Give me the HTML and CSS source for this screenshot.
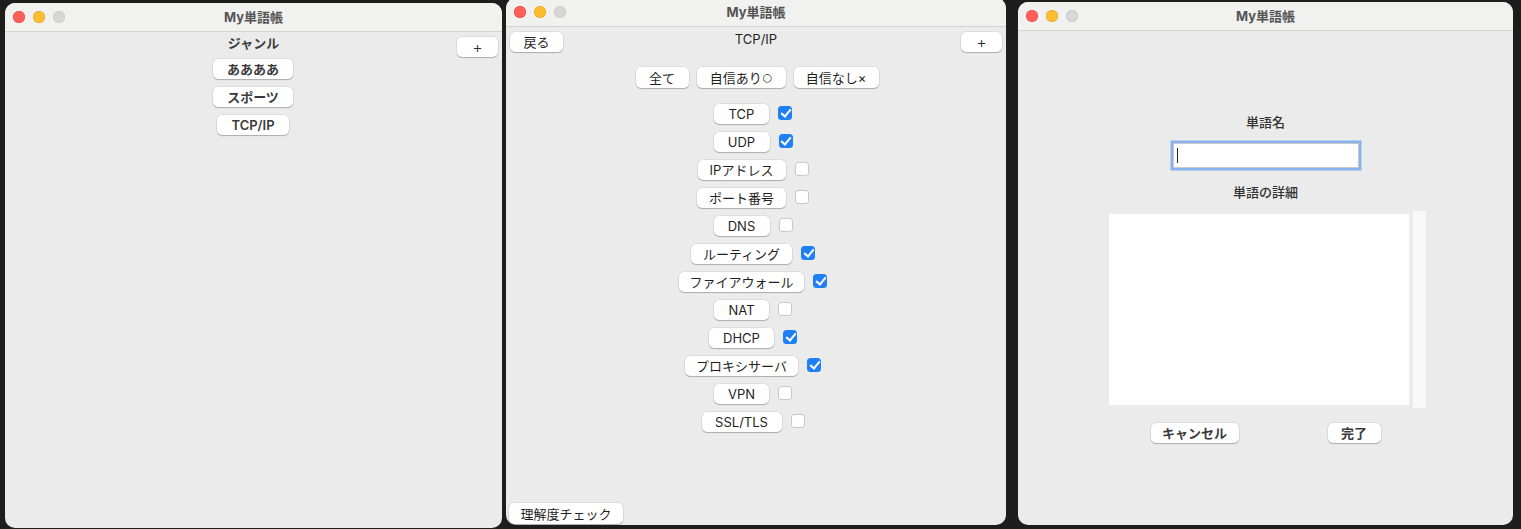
FILE: index.html
```html
<!DOCTYPE html>
<html lang="ja">
<head>
<meta charset="utf-8">
<title>My単語帳</title>
<link rel="stylesheet" href="styles.css">
</head>
<body>
<div class="desktop">

  <section class="window win-genre">
    <header class="titlebar">
      <div class="lights"><span class="light red"></span><span class="light yellow"></span><span class="light gray"></span></div>
      <div class="title">My単語帳</div>
    </header>
    <div class="content genre-content">
      <div class="head-row">
        <div></div>
        <div class="genre-label">ジャンル</div>
        <button class="btn plus-btn">+</button>
      </div>
      <div class="genre-list">
        <button class="btn bold genre-btn">ああああ</button>
        <button class="btn bold genre-btn">スポーツ</button>
        <button class="btn bold genre-btn tcp">TCP/IP</button>
      </div>
    </div>
  </section>

  <section class="window win-words">
    <header class="titlebar">
      <div class="lights"><span class="light red"></span><span class="light yellow"></span><span class="light gray"></span></div>
      <div class="title">My単語帳</div>
    </header>
    <div class="content words-content">
      <div class="head-row words-head">
        <div><button class="btn back-btn">戻る</button></div>
        <div class="words-title">TCP/IP</div>
        <button class="btn plus-btn">+</button>
      </div>
      <div class="filters">
        <button class="btn filter-btn f-all">全て</button>
        <button class="btn filter-btn f-yes">自信あり<span class="mark">○</span></button>
        <button class="btn filter-btn f-no">自信なし×</button>
      </div>
      <div class="word-list">
        <div class="word-row"><button class="btn word-btn w55">TCP</button><span class="check on"></span></div>
        <div class="word-row"><button class="btn word-btn w56">UDP</button><span class="check on"></span></div>
        <div class="word-row"><button class="btn word-btn w88">IPアドレス</button><span class="check"></span></div>
        <div class="word-row"><button class="btn word-btn w89">ポート番号</button><span class="check"></span></div>
        <div class="word-row"><button class="btn word-btn w56">DNS</button><span class="check"></span></div>
        <div class="word-row"><button class="btn word-btn w101">ルーティング</button><span class="check on"></span></div>
        <div class="word-row"><button class="btn word-btn w125">ファイアウォール</button><span class="check on"></span></div>
        <div class="word-row"><button class="btn word-btn w55">NAT</button><span class="check"></span></div>
        <div class="word-row"><button class="btn word-btn w65">DHCP</button><span class="check on"></span></div>
        <div class="word-row"><button class="btn word-btn w113">プロキシサーバ</button><span class="check on"></span></div>
        <div class="word-row"><button class="btn word-btn w55">VPN</button><span class="check"></span></div>
        <div class="word-row"><button class="btn word-btn w80">SSL/TLS</button><span class="check"></span></div>
      </div>
      <div class="bottom-bar">
        <button class="btn check-btn">理解度チェック</button>
      </div>
    </div>
  </section>

  <section class="window win-edit">
    <header class="titlebar">
      <div class="lights"><span class="light red"></span><span class="light yellow"></span><span class="light gray"></span></div>
      <div class="title">My単語帳</div>
    </header>
    <div class="content edit-content">
      <div class="field-label">単語名</div>
      <div class="text-input"><span class="caret"></span></div>
      <div class="field-label detail-label">単語の詳細</div>
      <div class="detail-row">
        <div class="text-area"></div>
        <div class="scroll-track"></div>
      </div>
      <div class="actions">
        <button class="btn bold cancel-btn">キャンセル</button>
        <button class="btn bold done-btn">完了</button>
      </div>
    </div>
  </section>

</div>
</body>
</html>
```

FILE: styles.css
```css
* { box-sizing: border-box; }

html, body {
  margin: 0;
  padding: 0;
  width: 1521px;
  height: 529px;
  overflow: hidden;
  background: #1d1d1d;
  font-family: "Inter", "Noto Sans CJK JP", sans-serif;
  font-size: 13px;
  color: #1f1f1f;
}

.desktop {
  position: relative;
  width: 1521px;
  height: 529px;
}

.window {
  position: absolute;
  display: flex;
  flex-direction: column;
  background: #ebebeb;
  border-radius: 10px;
  overflow: hidden;
}

.win-genre { left: 5px; top: 3px; width: 497px; height: 525px; }
.win-words { left: 506px; top: -2px; width: 500px; height: 527px; }
.win-edit  { left: 1018px; top: 2px; width: 495px; height: 523px; }

.titlebar {
  position: relative;
  flex: 0 0 29px;
  height: 29px;
  background: #f1f1f0;
  border-bottom: 1px solid #d3d3d3;
  display: flex;
  align-items: center;
  justify-content: center;
}

.lights {
  position: absolute;
  left: 8px;
  top: 8px;
  display: flex;
  gap: 8px;
}

.light {
  width: 12px;
  height: 12px;
  border-radius: 50%;
  display: block;
}
.light.red { background: #fe5f57; box-shadow: inset 0 0 0 0.5px #e2463f; }
.light.yellow { background: #febc2e; box-shadow: inset 0 0 0 0.5px #dea123; }
.light.gray { background: #d6d6d6; box-shadow: inset 0 0 0 0.5px #c4c4c4; }

.title {
  font-weight: 700;
  font-size: 13px;
  color: #545454;
  line-height: 16px;
  margin-top: -1px;
}

.content {
  flex: 1;
  display: flex;
  flex-direction: column;
}

.btn {
  font-family: inherit;
  font-size: 13px;
  color: #1f1f1f;
  background: #ffffff;
  border: none;
  border-radius: 5px;
  height: 20px;
  padding: 0 12px;
  line-height: 20px;
  box-shadow: 0 0 0 0.5px rgba(0, 0, 0, 0.12), 0 1px 1px rgba(0, 0, 0, 0.22);
  white-space: nowrap;
  display: inline-flex;
  align-items: center;
  justify-content: center;
}
.btn.bold { font-weight: 600; color: #3a3a3a; }

.head-row {
  display: grid;
  grid-template-columns: 1fr auto 1fr;
  align-items: start;
}

.plus-btn {
  justify-self: end;
  width: 41px;
  margin-right: 4px;
  padding: 0;
  font-size: 16px;
  font-weight: 300;
  color: #2a2a2a;
}

/* window 1 */
.genre-content .head-row { padding-top: 5px; }
.genre-label {
  font-weight: 700;
  color: #3c3c3c;
  line-height: 16px;
  margin-top: -2px;
}

.genre-list {
  display: flex;
  flex-direction: column;
  align-items: center;
  gap: 8px;
  margin-top: 2px;
  padding-right: 1px;
}
.genre-btn { width: 80px; padding: 0; }
.genre-btn.tcp { width: 72px; }

/* window 2 */
.words-head { padding-top: 5px; }
.back-btn { margin-left: 4px; width: 53px; padding: 0; }
.words-title {
  line-height: 16px;
  margin-top: -1px;
  color: #1f1f1f;
}

.filters {
  display: flex;
  justify-content: center;
  gap: 8px;
  margin-top: 15px;
  padding-left: 2px;
}
.filter-btn { height: 21px; padding: 0; }
.f-all { width: 53px; }
.f-yes { width: 89px; }
.f-no  { width: 85px; }
.mark { font-family: "DejaVu Sans", sans-serif; font-size: 11px; margin-left: 1px; }

.word-list {
  display: flex;
  flex-direction: column;
  align-items: center;
  gap: 8px;
  margin-top: 16px;
  padding-right: 6px;
}

.word-row {
  display: flex;
  align-items: center;
  gap: 9px;
  height: 20px;
}
.word-btn { padding: 0; }
.w55 { width: 55px; }
.w56 { width: 56px; }
.w65 { width: 65px; }
.w80 { width: 80px; }
.w88 { width: 88px; }
.w89 { width: 89px; }
.w101 { width: 101px; }
.w113 { width: 113px; }
.w125 { width: 125px; }

.check {
  width: 14px;
  height: 14px;
  border-radius: 3.5px;
  background: #ffffff;
  box-shadow: inset 0 0 0 1px #c9c9c9;
  display: block;
  position: relative;
  margin-top: -3px;
}
.check.on {
  background: #1f7ff5;
  box-shadow: none;
}
.check.on::after {
  content: "";
  position: absolute;
  left: 4.5px;
  top: 1.5px;
  width: 4px;
  height: 8px;
  border-right: 2px solid #fff;
  border-bottom: 2px solid #fff;
  transform: rotate(40deg);
}

.bottom-bar {
  margin-top: auto;
  padding: 0 0 1px 3px;
  display: flex;
}
.check-btn { width: 114px; height: 21px; padding: 0; }

/* window 3 */
.edit-content {
  align-items: center;
  padding-top: 83px;
}
.field-label {
  line-height: 16px;
  font-weight: 500;
  color: #333;
}
.text-input {
  margin-top: 13px;
  width: 186px;
  height: 25px;
  background: #fff;
  border: 1px solid #c9c9c9;
  box-shadow: 0 0 0 2.5px #86b3ef;
  display: flex;
  align-items: center;
  padding-left: 3px;
}
.caret {
  width: 1px;
  height: 15px;
  background: #222;
  display: block;
}
.detail-label { margin-top: 16px; }

.detail-row {
  margin-top: 11px;
  display: flex;
  align-items: center;
  gap: 4px;
  margin-left: 3px;
}
.text-area {
  width: 300px;
  height: 191px;
  background: #ffffff;
}
.scroll-track {
  width: 13px;
  height: 197px;
  background: #f8f8f8;
}

.actions {
  margin-top: 15px;
  display: flex;
  gap: 89px;
  justify-content: center;
}
.cancel-btn { width: 88px; padding: 0; }
.done-btn { width: 53px; padding: 0; }
```
